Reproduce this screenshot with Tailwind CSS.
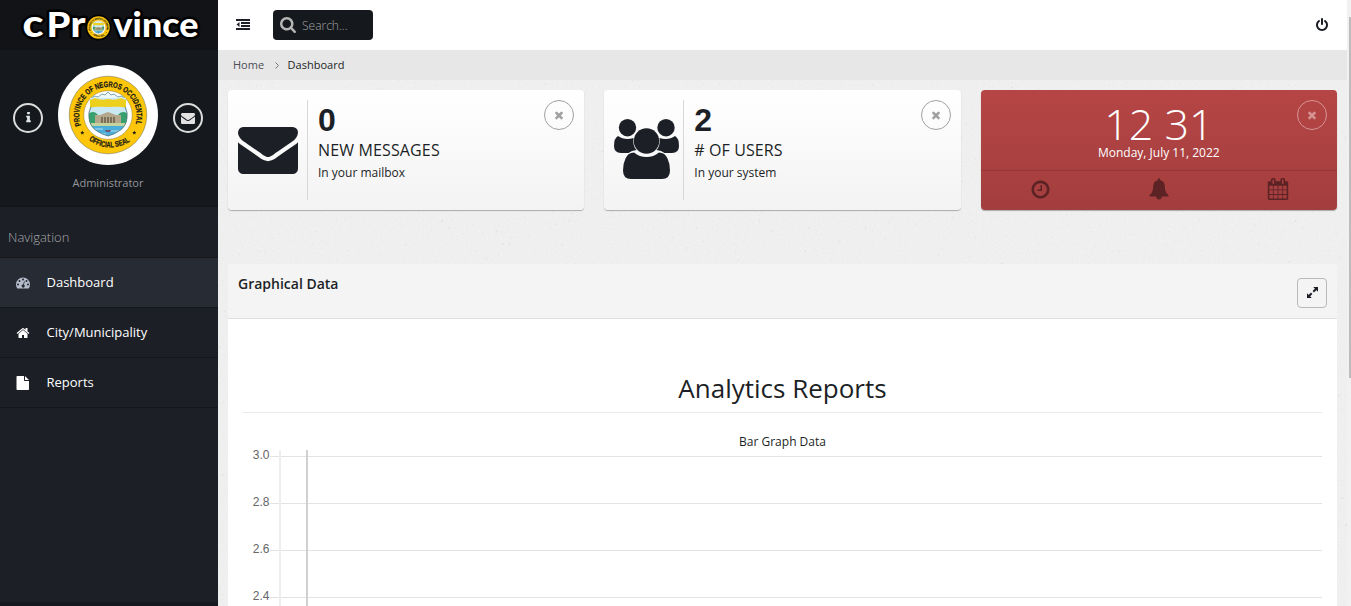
<!DOCTYPE html>
<html lang="en">
<head>
<meta charset="utf-8">
<title>cProvince</title>
<script src="https://cdn.jsdelivr.net/npm/@tailwindcss/browser@4"></script>
</head>
<body class="w-[1351px] h-[606px] overflow-hidden flex bg-[#f1f1f1] text-[#1c1f26] font-['Open_Sans',sans-serif] text-[13px]">

<svg width="0" height="0" class="absolute">
  <defs>
    <symbol id="times" viewBox="0 0 1792 1792"><path d="M1490 1322q0 40-28 68l-136 136q-28 28-68 28t-68-28l-294-294-294 294q-28 28-68 28t-68-28l-136-136q-28-28-28-68t28-68l294-294-294-294q-28-28-28-68t28-68l136-136q28-28 68-28t68 28l294 294 294-294q28-28 68-28t68 28l136 136q28 28 28 68t-28 68l-294 294 294 294q28 28 28 68z"/></symbol>
    <symbol id="envelope" viewBox="0 0 1792 1792"><path d="M1792 710v794q0 66-47 113t-113 47h-1472q-66 0-113-47t-47-113v-794q44 49 101 87 362 246 497 345 57 42 92.500 65.500t94.500 48 110 24.500h2q51 0 110-24.500t94.500-48 92.500-65.500q170-123 498-345 57-39 100-87zm0-294q0 79-49 151t-122 123q-376 261-468 325-10 7-42.500 31t-54 38.500-52 32.500-57.500 27-50 9h-2q-23 0-50-9t-57.500-27-52-32.500-54-38.500-42.500-31q-91-64-262-182.500t-205-142.500q-62-42-117-115.500t-55-136.500q0-78 41.500-130t118.500-52h1472q65 0 112.500 47t47.500 113z"/></symbol>
    <symbol id="seal" viewBox="0 0 100 100">
      <circle cx="50" cy="50" r="38.800" fill="#fdc60b" stroke="#6a6646" stroke-width=".5"/>
      <circle cx="50" cy="50" r="24.300" fill="#fff" stroke="#8b7a38" stroke-width=".5"/>
      <clipPath id="shield"><path d="M32 33h36v9q2 5 1 11-1 9-8 13-4 3-11 5-7-2-11-5-7-4-8-13-1-6 1-11z"/></clipPath>
      <path d="M33 35l3-4 4 1 4-3 3 1 3-3 3 3 3-1 4 3 4-1 3 4z" fill="#eef8f8" stroke="#5b8f95" stroke-width=".8"/>
      <g clip-path="url(#shield)">
        <path d="M29 32h42v42h-42z" fill="#c9e8f2"/>
        <path d="M29 34q4 2 8-1 6 3 13 1 7 2 13-1 4 3 8 1v9q-10-2-21-1-11-1-21 1z" fill="#ecd01d"/>
        <path d="M29 50q5-5 9-2l3 3h18l3-3q5-3 9 2v11h-42z" fill="#38a06c"/>
        <path d="M37 50h5l8-3 8 3h5v8h-26z" fill="#b5a78b"/>
        <path d="M44 52v6m3-6v6m3-6v6m3-6v6m3-6v6" stroke="#645742" stroke-width="1.400"/>
        <path d="M31 58h38v3h-38z" fill="#c3d39c"/>
        <path d="M29 61h42v14h-42z" fill="#4aaedb"/>
        <path d="M33 64h12m6 2h12m-24 3h9m5 2h6" stroke="#bfe6f5" stroke-width=".9"/>
        <path d="M47 65h6l-1 2h-4z" fill="#76536c"/>
      </g>
      <path d="M33 42q-3 5-2 11 1 9 8 13 4 3 11 5 7-2 11-5 7-4 8-13 1-6-2-11" fill="none" stroke="#4d7377" stroke-width=".8"/>
      <path id="arcTop" d="M23 60.500A28.700 28.700 0 1 1 77 60.500" fill="none"/>
      <path id="arcBottom" d="M28.500 73A34.200 34.200 0 0 0 71.500 76.500" fill="none"/>
      <g font-family="Liberation Sans Narrow, Liberation Sans, sans-serif" font-weight="700" fill="#1b1a14" stroke="#1b1a14" stroke-width=".25">
        <text font-size="8"><textPath href="#arcTop" textLength="108" lengthAdjust="spacingAndGlyphs">PROVINCE OF NEGROS OCCIDENTAL</textPath></text>
        <text font-size="8"><textPath href="#arcBottom" startOffset="3" textLength="44" lengthAdjust="spacingAndGlyphs">OFFICIAL SEAL</textPath></text>
      </g>
      <path id="star" d="M24.300 65.600l.6 1.400 1.500.1-1.200 1 .4 1.500-1.300-.8-1.300.8.4-1.500-1.200-1 1.500-.1z" fill="#1b1a14"/>
      <use href="#star" x="52"/>
    </symbol>
  </defs>
</svg>

<aside class="w-[218px] h-full shrink-0 bg-[#1c1f26] flex flex-col">
  <div class="h-[50px] bg-[#111316] shrink-0">
    <svg width="218" height="50" viewBox="0 0 218 50">
      <g font-family="Lato, sans-serif" font-weight="900" fill="#fff" stroke="#000" stroke-width="5" stroke-linejoin="round" paint-order="stroke">
        <text x="22.500" y="36.500" font-size="38" textLength="21" lengthAdjust="spacingAndGlyphs">c</text>
        <text x="46.500" y="37" font-size="35" textLength="24" lengthAdjust="spacingAndGlyphs">P</text>
        <text x="70.500" y="37" font-size="36" textLength="15" lengthAdjust="spacingAndGlyphs">r</text>
        <text x="113.500" y="37" font-size="35" textLength="85" lengthAdjust="spacingAndGlyphs">vince</text>
      </g>
      <circle cx="98.500" cy="27.500" r="13" fill="#000"/>
      <use href="#seal" x="84" y="13" width="29" height="29"/>
    </svg>
  </div>
  <div class="h-[157px] bg-[#15181d] border-b border-[#121418] shrink-0 flex flex-col">
    <div class="mt-[15px] flex items-center pl-[13px] gap-[15px]">
      <div class="mt-[6px] size-[30px] rounded-full border-2 border-[#dcdcdc] flex items-center justify-center">
        <svg class="mb-px size-[13px] fill-[#dfe5e8]" viewBox="0 0 1792 1792"><path d="M1216 1344v128q0 26-19 45t-45 19h-512q-26 0-45-19t-19-45v-128q0-26 19-45t45-19h64v-384h-64q-26 0-45-19t-19-45v-128q0-26 19-45t45-19h384q26 0 45 19t19 45v576h64q26 0 45 19t19 45zm-128-1152v192q0 26-19 45t-45 19h-256q-26 0-45-19t-19-45v-192q0-26 19-45t45-19h256q26 0 45 19t19 45z"/></svg>
      </div>
      <div class="size-[100px] rounded-full bg-white"><svg width="100" height="100"><use href="#seal"/></svg></div>
      <div class="mt-[6px] size-[30px] rounded-full border-2 border-[#dcdcdc] flex items-center justify-center">
        <svg class="size-[14px] fill-[#e2e2e2]"><use href="#envelope"/></svg>
      </div>
    </div>
    <div class="mt-[10px] pr-[2px] text-center text-[11px] leading-[16px] text-[#94969a]">Administrator</div>
  </div>
  <div class="h-[50px] shrink-0 pt-[20px] pl-2 text-[13px] leading-5 font-light text-[#a4a6a9]">Navigation</div>
  <nav class="flex flex-col text-white text-[13px]">
    <a class="h-[51px] flex items-center border-y border-[#15171c] bg-[#272b33] pl-4">
      <svg class="w-[14px] h-[14px] fill-[#b4bccb]" viewBox="0 0 14 14"><path fill-rule="evenodd" d="M7 1.500a7 7 0 0 0-7 7c0 1.400.4 2.700 1.100 3.800.1.200.3.300.5.300h10.800c.2 0 .4-.1.500-.3.700-1.100 1.100-2.400 1.100-3.800a7 7 0 0 0-7-7zM2 7.500a1 1 0 1 1 0 2 1 1 0 0 1 0-2zM3.500 4a1 1 0 1 1 0 2 1 1 0 0 1 0-2zM7 2.500a1 1 0 1 1 0 2 1 1 0 0 1 0-2zM10.500 4a1 1 0 1 1 0 2 1 1 0 0 1 0-2zM12 7.500a1 1 0 1 1 0 2 1 1 0 0 1 0-2zM8.100 5.300l.7.200-.9 3.200a1.500 1.500 0 1 1-.8-.2z"/></svg>
      <span class="ml-[16.500px]">Dashboard</span>
    </a>
    <a class="h-[50px] flex items-center border-b border-[#15171c] pl-4">
      <svg class="size-[14px] fill-white" viewBox="0 0 1792 1792"><path d="M1472 992v480q0 26-19 45t-45 19h-384v-384h-256v384h-384q-26 0-45-19t-19-45v-480q0-1 .5-3t.5-3l575-474 575 474q1 2 1 6zm223-69l-62 74q-8 9-21 11h-3q-13 0-21-7l-692-577-692 577q-12 8-24 7-13-2-21-11l-62-74q-8-10-7-23.500t11-21.500l719-599q32-26 76-26t76 26l244 204v-195q0-14 9-23t23-9h192q14 0 23 9t9 23v408l219 182q10 8 11 21.500t-7 23.500z"/></svg>
      <span class="ml-[16.500px]">City/Municipality</span>
    </a>
    <a class="h-[50px] flex items-center border-b border-[#15171c] pl-4">
      <svg class="size-[14px] fill-white" viewBox="0 0 14 14"><path d="M.5.800q0-.8.800-.8H8v4.200q0 .8.800.8H13v8.200q0 .8-.8.800H1.300q-.8 0-.8-.8zM9 .2q.3.100.5.300l3 3q.2.200.3.500H9z"/></svg>
      <span class="ml-[16.500px]">Reports</span>
    </a>
  </nav>
  <div class="mt-auto h-1 bg-[#15181d]"></div>
</aside>

<main class="w-[1129px] h-full shrink-0 flex flex-col relative">
  <svg class="absolute inset-0 -z-10" width="1129" height="606">
    <filter id="grain" x="0" y="0" width="100%" height="100%"><feTurbulence type="fractalNoise" baseFrequency=".6" numOctaves="2" seed="4"/><feColorMatrix values="0 0 0 0 .5  0 0 0 0 .5  0 0 0 0 .48  .2 0 0 0 -.085"/></filter>
    <filter id="specks" x="0" y="0" width="100%" height="100%"><feTurbulence type="fractalNoise" baseFrequency=".3" numOctaves="2" seed="9"/><feColorMatrix values="0 0 0 0 .5  0 0 0 0 .5  0 0 0 0 .45  4 0 0 0 -2.900"/></filter>
    <rect width="1129" height="606" fill="#f0f0f0"/>
    <rect width="1129" height="606" filter="url(#grain)"/>
    <rect width="1129" height="606" filter="url(#specks)" opacity=".5"/>
  </svg>
  <header class="h-[50px] shrink-0 bg-white flex items-center pl-[18px] pr-[18px]">
    <svg class="w-[14px] h-[11px] mb-px fill-[#1c1f26]" viewBox="0 0 14 11"><path d="M0 0h14v2H0zM5 3h9v2H5zM5 6h9v2H5zM0 9h14v2H0zM3.500 3v5L.5 5.500z"/></svg>
    <div class="ml-[23px] w-[100px] h-[30px] rounded-[4px] bg-[#15181d] flex items-center pl-[7px]">
      <svg class="size-[16px] mb-px fill-[#b5b5b5]" viewBox="64 128 1664 1664"><path d="M1216 832q0-185-131.500-316.500t-316.500-131.500-316.500 131.500-131.500 316.500 131.500 316.500 316.500 131.500 316.500-131.500 131.500-316.500zm512 832q0 52-38 90t-90 38q-54 0-90-38l-343-342q-179 124-399 124-143 0-273.500-55.500t-225-150-150-225-55.500-273.500 55.500-273.500 150-225 225-150 273.500-55.500 273.500 55.500 225 150 150 225 55.500 273.500q0 220-124 399l343 343q37 37 37 90z"/></svg>
      <span class="ml-[6px] mt-px text-xs font-light text-[#a5a5a5]">Search...</span>
    </div>
    <svg class="ml-auto size-[14px] fill-[#1c1f26]" viewBox="0 0 1792 1792"><path d="M1664 896q0 156-61 298t-164 245-245 164-298 61-298-61-245-164-164-245-61-298q0-182 80.500-343t226.500-270q43-32 95.500-25t83.500 50q32 42 24.500 94.500t-49.500 84.500q-98 74-151.500 181t-53.500 228q0 104 40.500 198.500t109.500 163.500 163.500 109.500 198.500 40.500 198.500-40.500 163.500-109.500 109.500-163.500 40.500-198.500q0-121-53.500-228t-151.500-181q-42-32-49.500-84.500t24.500-94.500q31-43 84-50t95 25q146 109 226.500 270t80.500 343zm-640-768v640q0 52-38 90t-90 38-90-38-38-90v-640q0-52 38-90t90-38 90 38 38 90z"/></svg>
  </header>
  <div class="h-[30px] shrink-0 bg-[#e7e7e7] flex items-center pl-[15px] text-[11px]">
    <span class="text-[#4b4e55]">Home</span>
    <svg class="ml-[11px] w-[4px] h-[7px]" viewBox="0 0 4 7" fill="none" stroke="#777" stroke-width="1"><path d="M.5.500l3 3-3 3"/></svg>
    <span class="ml-[8.500px]">Dashboard</span>
  </div>

  <div class="mt-[10px] mx-[10px] h-[120px] shrink-0 grid grid-cols-3 gap-5">
    <section class="rounded-[4px] bg-linear-to-b from-white to-[#f3f3f3] shadow-[0_1px_1px_#aaa] flex pt-[10px] px-[10px]">
      <svg class="w-[60px] h-[47px] mt-[27px] fill-[#1c1f26]" viewBox="0 256 1792 1408" preserveAspectRatio="none"><path d="M1792 710v794q0 66-47 113t-113 47h-1472q-66 0-113-47t-47-113v-794q44 49 101 87 362 246 497 345 57 42 92.500 65.500t94.500 48 110 24.500h2q51 0 110-24.500t94.500-48 92.500-65.500q170-123 498-345 57-39 100-87zm0-294q0 79-49 151t-122 123q-376 261-468 325-10 7-42.500 31t-54 38.500-52 32.500-57.500 27-50 9h-2q-23 0-50-9t-57.500-27-52-32.500-54-38.500-42.500-31q-91-64-262-182.500t-205-142.500q-62-42-117-115.500t-55-136.500q0-78 41.500-130t118.500-52h1472q65 0 112.500 47t47.500 113z"/></svg>
      <div class="ml-[9px] h-[100px] border-l border-[#d8d8d8] pl-[10px]">
        <div class="font-['Liberation_Sans',sans-serif] text-[32px] leading-[40px] font-bold">0</div>
        <div class="text-base leading-5 tracking-[0.14px]">NEW MESSAGES</div>
        <div class="mt-[3px] text-xs leading-5">In your mailbox</div>
      </div>
      <div class="ml-auto size-[30px] rounded-full border border-[#a0a0a0] flex items-center justify-center"><svg class="size-[12px] fill-[#a0a0a0]"><use href="#times"/></svg></div>
    </section>

    <section class="rounded-[4px] bg-linear-to-b from-white to-[#f3f3f3] shadow-[0_1px_1px_#aaa] flex pt-[10px] px-[10px]">
      <svg class="w-[65px] h-[60px] mt-[19px] fill-[#1c1f26]" viewBox="0 0 65 60"><circle cx="13.500" cy="8.700" r="8.700"/><circle cx="52" cy="8.700" r="8.700"/><path d="M4 17q4 3 9.500 3 3 0 6-1-1 8 3 12-5 .5-8 3H7q-7 0-7-7 0-8 4-10zM61 17q-4 3-9.500 3-3 0-6-1 1 8-3 12 5 .5 8 3H58q7 0 7-7 0-8-4-10z"/><circle cx="32.500" cy="22" r="12.700"/><path d="M20 33.500q5.500 4.500 12.500 4.500T45 33.500q6 0 8.500 6 2.500 5 2.500 12 0 8.500-8 8.500H17q-8 0-8-8.500 0-7 2.500-12 2.500-6 8.500-6z"/></svg>
      <div class="ml-[4px] h-[100px] border-l border-[#d8d8d8] pl-[10px]">
        <div class="font-['Liberation_Sans',sans-serif] text-[32px] leading-[40px] font-bold">2</div>
        <div class="text-base leading-5 tracking-[0.1px]"># OF USERS</div>
        <div class="mt-[3px] text-xs leading-5">In your system</div>
      </div>
      <div class="ml-auto size-[30px] rounded-full border border-[#a0a0a0] flex items-center justify-center"><svg class="size-[12px] fill-[#a0a0a0]"><use href="#times"/></svg></div>
    </section>

    <section class="relative rounded-[4px] bg-linear-to-b from-[#b64545] to-[#a33e3e] shadow-[0_1px_1px_#aaa] text-white text-center flex flex-col">
      <div class="h-[80px] border-b border-[#963737] box-content">
        <div class="pt-[13px] text-[43px] leading-[41px] font-light">12 31</div>
        <div class="text-xs leading-[18px]">Monday, July 11, 2022</div>
      </div>
      <div class="flex-1 grid grid-cols-3 items-center justify-items-center pb-[3px]">
        <svg class="size-[21px] fill-[#5c2224]" viewBox="0 0 1792 1792"><path d="M1024 544v448q0 14-9 23t-23 9h-320q-14 0-23-9t-9-23v-64q0-14 9-23t23-9h224v-352q0-14 9-23t23-9h64q14 0 23 9t9 23zm416 352q0-148-73-273t-198-198-273-73-273 73-198 198-73 273 73 273 198 198 273 73 273-73 198-198 73-273zm224 0q0 209-103 385.500t-279.500 279.500-385.500 103-385.500-103-279.500-279.500-103-385.500 103-385.500 279.500-279.500 385.500-103 385.500 103 279.500 279.500 103 385.500z"/></svg>
        <svg class="w-[20px] h-[22px] fill-[#5c2224]" viewBox="0 0 20 22"><path d="M10 .3q1.200 0 1.200 1.300v.6q4.600 1 4.600 6.300 0 6 3.900 8.700 0 1.400-1.400 1.400h-5.500q0 2.800-2.800 2.800t-2.800-2.800H1.700q-1.400 0-1.400-1.400 3.900-2.700 3.900-8.700 0-5.300 4.600-6.300v-.6Q8.800.300 10 .3z"/></svg>
        <svg class="size-[22px] fill-[#5c2224]" viewBox="0 0 1792 1792"><path d="M192 1664h288v-288h-288v288zm352 0h320v-288h-320v288zm-352-352h288v-320h-288v320zm352 0h320v-320h-320v320zm-352-384h288v-288h-288v288zm736 736h320v-288h-320v288zm-384-736h320v-288h-320v288zm768 736h288v-288h-288v288zm-384-352h320v-320h-320v320zm-352-864v-288q0-13-9.500-22.500t-22.500-9.500h-64q-13 0-22.500 9.500t-9.500 22.500v288q0 13 9.500 22.500t22.500 9.500h64q13 0 22.500-9.500t9.500-22.500zm736 864h288v-320h-288v320zm-384-384h320v-288h-320v288zm384 0h288v-288h-288v288zm32-480v-288q0-13-9.500-22.500t-22.500-9.500h-64q-13 0-22.500 9.500t-9.500 22.500v288q0 13 9.500 22.500t22.500 9.500h64q13 0 22.500-9.500t9.500-22.500zm384-64v1280q0 52-38 90t-90 38h-1408q-52 0-90-38t-38-90v-1280q0-52 38-90t90-38h128v-96q0-66 47-113t113-47h64q66 0 113 47t47 113v96h384v-96q0-66 47-113t113-47h64q66 0 113 47t47 113v96h128q52 0 90 38t38 90z"/></svg>
      </div>
      <div class="absolute top-[10px] right-[10px] size-[30px] rounded-full border border-[#d49494] flex items-center justify-center"><svg class="size-[12px] fill-[#d49494]"><use href="#times"/></svg></div>
    </section>
  </div>

  <section class="mt-[54px] mx-[10px] flex-1 min-h-0 bg-white rounded-t-[4px] flex flex-col overflow-hidden">
    <div class="h-[55px] shrink-0 bg-[#f4f4f4] border-b border-[#e0e0e0] flex px-[10px]">
      <h2 class="pt-[10px] text-[14px] leading-5 font-semibold">Graphical Data</h2>
      <div class="ml-auto mt-[14px] size-[30px] rounded-[4px] border border-[#b9b9b9] flex items-center justify-center">
        <svg class="size-[11px] mb-px fill-[#1c1f26] stroke-[#1c1f26]" viewBox="0 0 11 11"><path stroke="none" d="M6.200 0H11v4.800zM0 6.200V11h4.800z"/><path d="M9 2L6.300 4.700M4.700 6.300L2 9" stroke-width="2"/></svg>
      </div>
    </div>
    <div class="mx-[15px] h-[94px] shrink-0 border-b border-[#eaeaea] pt-[51px] text-center text-[26px] leading-[36px]">Analytics Reports</div>
    <div class="mt-[19px] text-center text-xs leading-[20px]">Bar Graph Data</div>
    <svg class="mt-[-3px] shrink-0" width="1109" height="160" font-family="Liberation Sans, Arial, sans-serif" font-size="12" fill="#666">
      <g stroke="#e3e3e3"><path d="M42 7.500h1052M42 54.500h1052M42 101.500h1052M42 148.500h1052"/><path d="M52 1v159" stroke="#eee" stroke-width="2"/></g>
      <path d="M79 1v159" stroke="#d0d0d0" stroke-width="2"/>
      <g text-anchor="end"><text x="41.500" y="10">3.0</text><text x="41.500" y="57">2.8</text><text x="41.500" y="104">2.6</text><text x="41.500" y="151">2.4</text></g>
    </svg>
  </section>
</main>

<div class="w-1 h-full bg-[#f1f1f1] pt-[17px] pl-[2px]"><div class="h-[361px] w-[2px] bg-[#bcbcbc]"></div></div>
</body>
</html>
